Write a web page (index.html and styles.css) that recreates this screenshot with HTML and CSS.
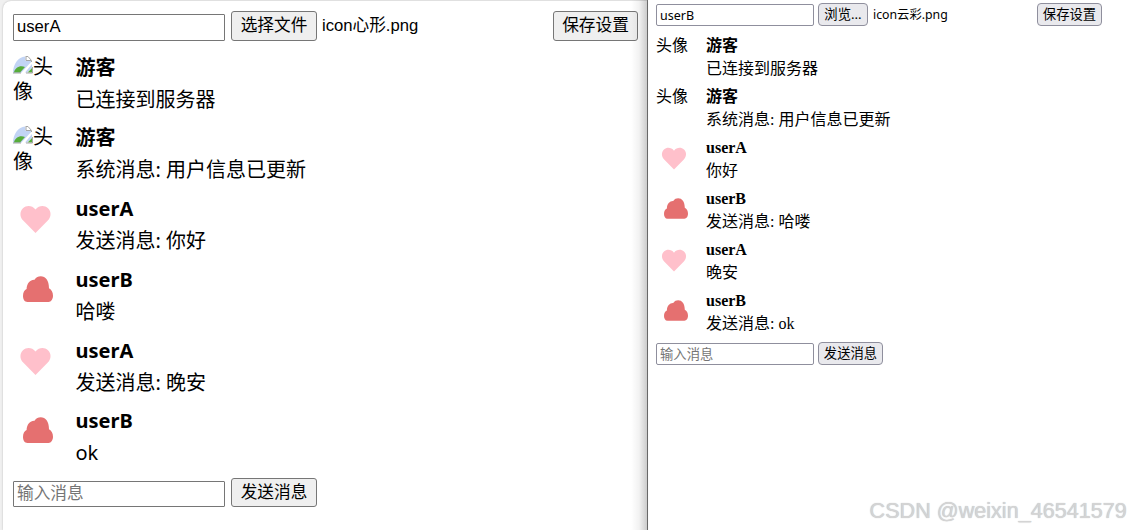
FILE: index.html
```html
<!DOCTYPE html>
<html lang="zh-CN">
<head>
<meta charset="UTF-8">
<meta name="viewport" content="width=device-width, initial-scale=1">
<title>聊天室</title>
<link rel="stylesheet" href="styles.css">
</head>
<body>

<!-- shared icons -->
<svg class="sprite" aria-hidden="true">
  <symbol id="heart" viewBox="0 0 50 50">
    <path fill="#ffc0cb" d="M22.5 38 L10.2 25.6 C6.5 21.8 6.6 16.4 10 13.2 C13.6 10 19.2 10.4 22.5 14.6 C25.8 10.4 31.4 10 35 13.2 C38.4 16.4 38.5 21.8 34.8 25.6 Z"/>
  </symbol>
  <symbol id="cloud" viewBox="0 0 50 50">
    <path fill="#e57070" d="M14.5 36 C11.5 36 10 33 10 30 C10 26.3 11.4 24 13.6 23 C13.8 17 17.5 13.4 21.5 13.7 C23.3 11.2 25.3 10.3 27.7 10.3 C32.5 10.3 36 14.5 36 22.3 C38.5 23.7 40 26.3 40 29.8 C40 33 38.3 36 35.5 36 Z"/>
  </symbol>
  <symbol id="broken" viewBox="0 0 20 20">
    <path fill="#c2d4f5" d="M0 18 C0 9 5.5 2 12 1.5 L12.5 6 H19 L8 18 Z M19 9 V13 L14 17.5 H12 Z"/>
    <path fill="#56ad3a" d="M1 17.5 C2 13 6.5 10 12 12 L7 17.5 Z M14.5 17.5 L19 13 V17.5 Z"/>
    <path fill="none" stroke="#a5a5a5" d="M0 18 H8 M13 18 H19.5 V12 M12.5 1.5 H15 L18.5 5.5 V7 M13 2 V5.5 H18"/>
  </symbol>
</svg>

<div class="window chrome">
  <div class="card">
    <div class="settings">
      <input type="text" value="userA">
      <button type="button">选择文件</button>
      <span class="filename">icon心形.png</span>
      <button type="button" class="save">保存设置</button>
    </div>

    <div class="messages">
      <div class="message">
        <div class="avatar missing"><svg><use href="#broken"/></svg>头像</div>
        <div class="content"><strong>游客</strong><p>已连接到服务器</p></div>
      </div>
      <div class="message">
        <div class="avatar missing"><svg><use href="#broken"/></svg>头像</div>
        <div class="content"><strong>游客</strong><p>系统消息: 用户信息已更新</p></div>
      </div>
      <div class="message">
        <svg class="avatar"><use href="#heart"/></svg>
        <div class="content"><strong>userA</strong><p>发送消息: 你好</p></div>
      </div>
      <div class="message">
        <svg class="avatar"><use href="#cloud"/></svg>
        <div class="content"><strong>userB</strong><p>哈喽</p></div>
      </div>
      <div class="message">
        <svg class="avatar"><use href="#heart"/></svg>
        <div class="content"><strong>userA</strong><p>发送消息: 晚安</p></div>
      </div>
      <div class="message">
        <svg class="avatar"><use href="#cloud"/></svg>
        <div class="content"><strong>userB</strong><p>ok</p></div>
      </div>
    </div>

    <div class="composer">
      <input type="text" placeholder="输入消息">
      <button type="button">发送消息</button>
    </div>
  </div>
</div>

<div class="window firefox">
  <div class="settings">
    <input type="text" value="userB">
    <button type="button" class="browse">浏览...</button>
    <span class="filename">icon云彩.png</span>
    <button type="button" class="save">保存设置</button>
  </div>

  <div class="messages">
    <div class="message">
      <div class="avatar">头像</div>
      <div class="content"><strong>游客</strong><p>已连接到服务器</p></div>
    </div>
    <div class="message">
      <div class="avatar">头像</div>
      <div class="content"><strong>游客</strong><p>系统消息: 用户信息已更新</p></div>
    </div>
    <div class="message">
      <svg class="avatar"><use href="#heart"/></svg>
      <div class="content"><strong>userA</strong><p>你好</p></div>
    </div>
    <div class="message">
      <svg class="avatar"><use href="#cloud"/></svg>
      <div class="content"><strong>userB</strong><p>发送消息: 哈喽</p></div>
    </div>
    <div class="message">
      <svg class="avatar"><use href="#heart"/></svg>
      <div class="content"><strong>userA</strong><p>晚安</p></div>
    </div>
    <div class="message">
      <svg class="avatar"><use href="#cloud"/></svg>
      <div class="content"><strong>userB</strong><p>发送消息: ok</p></div>
    </div>
  </div>

  <div class="composer">
    <input type="text" placeholder="输入消息">
    <button type="button">发送消息</button>
  </div>
</div>

<div class="watermark">CSDN @weixin_46541579</div>

</body>
</html>
```
FILE: styles.css
```css
* {
  box-sizing: border-box;
}

body {
  margin: 0;
  height: 530px;
  display: flex;
  overflow: hidden;
  position: relative;
  background: #fff;
  color: #000;
}

p {
  margin: 0;
}

.sprite {
  position: absolute;
  width: 0;
  height: 0;
}

.window {
  height: 530px;
}

.settings,
.composer {
  display: flex;
  align-items: flex-end;
}

.message {
  display: flex;
}

.message strong {
  display: block;
}

.avatar {
  flex: none;
}

input,
button {
  margin: 0;
  color: #000;
  font-family: inherit;
}

button {
  padding: 0;
  white-space: nowrap;
}

input::placeholder {
  color: #757575;
}

.filename {
  white-space: nowrap;
}

.save {
  margin-left: auto;
}

/* left window */
.chrome {
  width: 648px;
  padding: 1px 0 0 3px;
  border-right: 1px solid #707070;
  background: #f0f0f0;
  position: relative;
  font-family: "Noto Sans", "Noto Sans CJK SC", sans-serif;
  font-size: 20px;
}

/* shadow cast by the window on the right */
.chrome::after {
  content: '';
  position: absolute;
  top: 0;
  right: 0;
  bottom: 0;
  width: 16px;
  background: linear-gradient(to right, rgba(0, 0, 0, 0), rgba(0, 0, 0, 0.05) 50%, rgba(0, 0, 0, 0.2));
}

.card {
  height: 529px;
  padding: 10px 9px 0 10px;
  border-radius: 8px 0 0 0;
  background: #fff;
  box-shadow: 0 0 2px rgba(0, 0, 0, 0.25);
}

.chrome .settings,
.chrome .composer {
  font-family: "Liberation Sans", "Noto Sans CJK SC", sans-serif;
  font-size: 16.67px;
}

.chrome input {
  width: 212px;
  height: 27px;
  margin-right: 6px;
  padding: 0 3px 1px;
  border: 1px solid #767676;
  border-radius: 1px;
  font-size: inherit;
}

.chrome .composer input {
  height: 26px;
}

.chrome button {
  width: 86px;
  height: 30px;
  border: 1px solid #767676;
  border-radius: 3px;
  background: #efefef;
  font-size: inherit;
  line-height: 28px;
}

.chrome .save {
  width: 85px;
}

.chrome .composer button {
  height: 29px;
  line-height: 27px;
}

.chrome .filename {
  margin-left: 5px;
  line-height: 30px;
}

.chrome .messages {
  padding-top: 12.5px;
}

.chrome .message {
  height: 70.75px;
  gap: 12.5px;
}

.chrome .avatar {
  width: 50px;
  height: 50px;
}

.chrome .missing {
  line-height: 25px;
  word-break: break-all;
}

.missing svg {
  width: 20px;
  height: 20px;
  vertical-align: -1px;
}

.chrome .content {
  line-height: 32px;
  margin-top: -2px;
}

/* right window */
.firefox {
  width: 482px;
  padding: 3px 28px 0 8px;
  font-family: "Liberation Serif", "Noto Sans CJK SC", serif;
  font-size: 16px;
}

.firefox .settings,
.firefox .composer {
  font-family: "Noto Sans", "Noto Sans CJK SC", sans-serif;
  font-size: 13.33px;
}

.firefox input {
  width: 158px;
  height: 22px;
  margin-right: 4px;
  padding: 0 3px;
  border: 1px solid #8f8f9d;
  border-radius: 2px;
  font-size: 12.5px;
}

.firefox .composer input {
  font-size: 13.33px;
}

.firefox button {
  width: 65px;
  height: 23px;
  border: 1px solid #8f8f9d;
  border-radius: 4px;
  background: #e9e9ed;
  font-size: 13.33px;
  line-height: 21px;
}

.firefox .browse {
  width: 50px;
}

.firefox .filename {
  margin-left: 5px;
  font-size: 12.3px;
  line-height: 23px;
}

.firefox .messages {
  padding: 9px 0 1px;
}

.firefox .message {
  height: 51px;
  gap: 10px;
}

.firefox .avatar {
  width: 40px;
  height: 40px;
  margin-top: 2px;
}

.firefox div.avatar {
  margin-top: 0;
  line-height: 22px;
}

.firefox .content {
  line-height: 22.5px;
}

.watermark {
  position: absolute;
  right: 3px;
  bottom: 5px;
  color: #d4d4d4;
  font-family: "Liberation Sans", sans-serif;
  font-size: 21.6px;
  line-height: 28px;
  text-shadow: -0.5px -0.5px 1px rgba(0, 0, 0, 0.25);
}
```
